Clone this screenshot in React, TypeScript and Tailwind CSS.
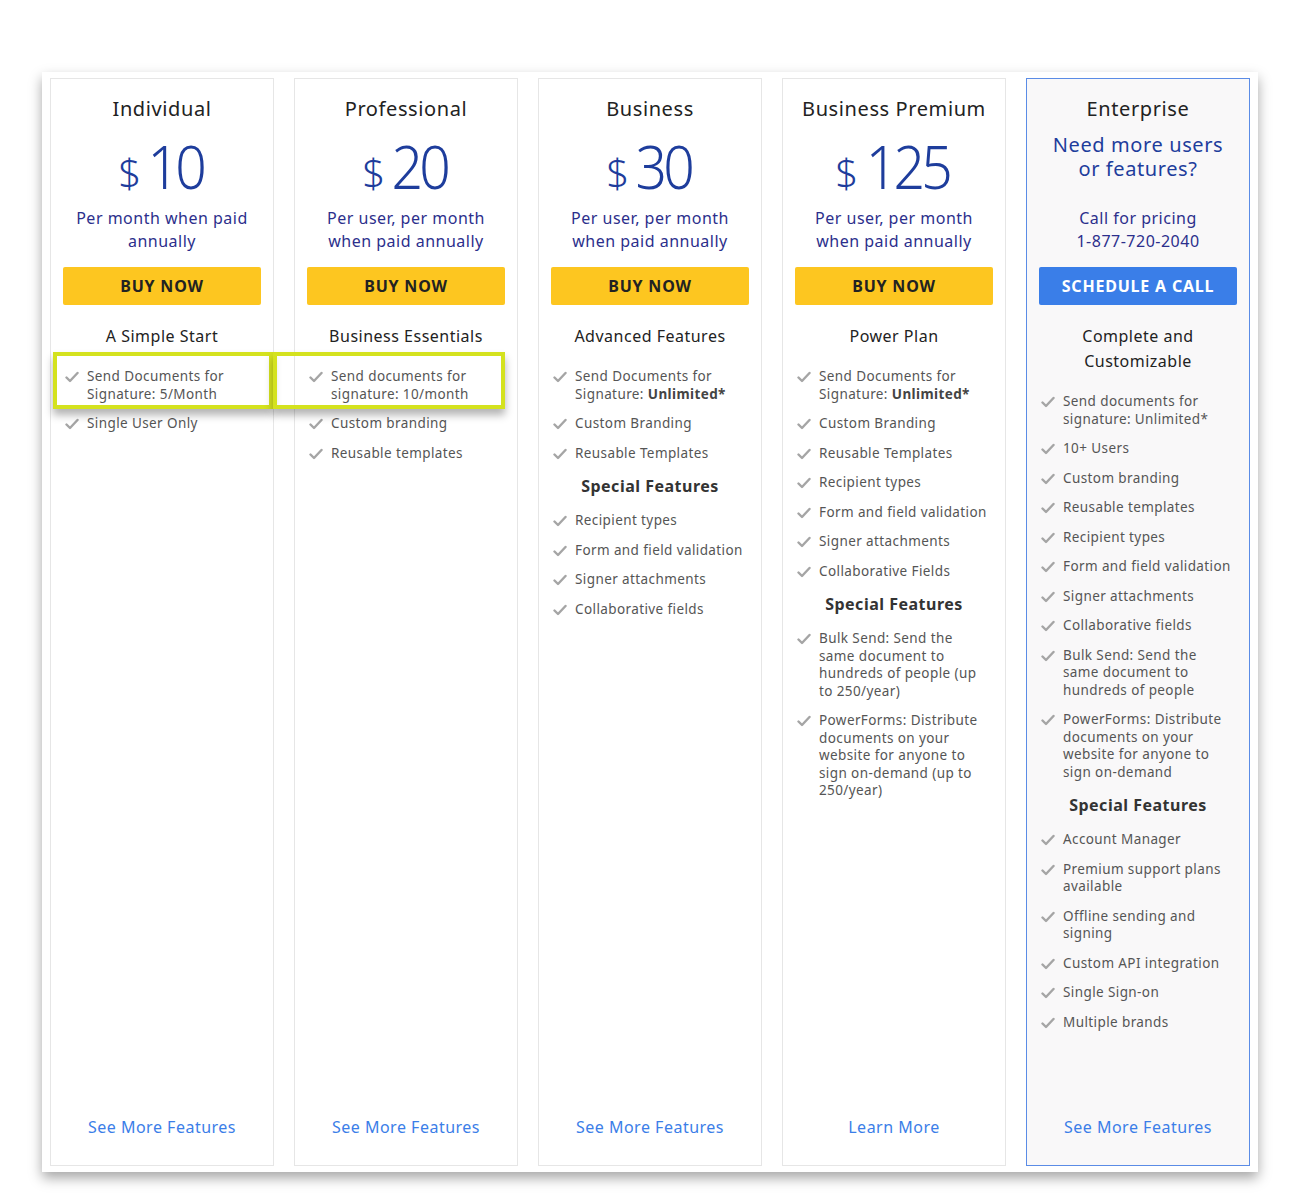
import { ReactNode } from "react";

type Item = string | { s: string } | { b: [string, string] };

interface Plan {
  name: string;
  price?: string;
  sub: string[];
  button: string;
  heading: string[];
  items: Item[];
  link: string;
  enterprise?: boolean;
}

const plans: Plan[] = [
  {
    name: "Individual",
    price: "10",
    sub: ["Per month when paid", "annually"],
    button: "BUY NOW",
    heading: ["A Simple Start"],
    items: ["Send Documents for\nSignature: 5/Month", "Single User Only"],
    link: "See More Features",
  },
  {
    name: "Professional",
    price: "20",
    sub: ["Per user, per month", "when paid annually"],
    button: "BUY NOW",
    heading: ["Business Essentials"],
    items: ["Send documents for\nsignature: 10/month", "Custom branding", "Reusable templates"],
    link: "See More Features",
  },
  {
    name: "Business",
    price: "30",
    sub: ["Per user, per month", "when paid annually"],
    button: "BUY NOW",
    heading: ["Advanced Features"],
    items: [
      { b: ["Send Documents for\nSignature: ", "Unlimited*"] },
      "Custom Branding",
      "Reusable Templates",
      { s: "Special Features" },
      "Recipient types",
      "Form and field validation",
      "Signer attachments",
      "Collaborative fields",
    ],
    link: "See More Features",
  },
  {
    name: "Business Premium",
    price: "125",
    sub: ["Per user, per month", "when paid annually"],
    button: "BUY NOW",
    heading: ["Power Plan"],
    items: [
      { b: ["Send Documents for\nSignature: ", "Unlimited*"] },
      "Custom Branding",
      "Reusable Templates",
      "Recipient types",
      "Form and field validation",
      "Signer attachments",
      "Collaborative Fields",
      { s: "Special Features" },
      "Bulk Send: Send the\nsame document to\nhundreds of people (up\nto 250/year)",
      "PowerForms: Distribute\ndocuments on your\nwebsite for anyone to\nsign on-demand (up to\n250/year)",
    ],
    link: "Learn More",
  },
  {
    name: "Enterprise",
    sub: ["Call for pricing", "1-877-720-2040"],
    button: "SCHEDULE A CALL",
    heading: ["Complete and", "Customizable"],
    items: [
      "Send documents for\nsignature: Unlimited*",
      "10+ Users",
      "Custom branding",
      "Reusable templates",
      "Recipient types",
      "Form and field validation",
      "Signer attachments",
      "Collaborative fields",
      "Bulk Send: Send the\nsame document to\nhundreds of people",
      "PowerForms: Distribute\ndocuments on your\nwebsite for anyone to\nsign on-demand",
      { s: "Special Features" },
      "Account Manager",
      "Premium support plans\navailable",
      "Offline sending and\nsigning",
      "Custom API integration",
      "Single Sign-on",
      "Multiple brands",
    ],
    link: "See More Features",
    enterprise: true,
  },
];

function Check() {
  return (
    <svg width="14" height="12" viewBox="0 0 14 12" className="mt-[3px] shrink-0">
      <path d="M1.5 6.5 L5 10 L12.5 2" fill="none" stroke="#a5a5a5" strokeWidth="2.4" strokeLinecap="round" strokeLinejoin="round" />
    </svg>
  );
}

function Feature({ item }: { item: Item }) {
  if (typeof item === "object" && "s" in item) {
    return <p className="text-center text-[16px] leading-[20px] font-bold text-[#333] pt-[2px] pb-[4px] tracking-[0.5px]">{item.s}</p>;
  }
  let content: ReactNode;
  if (typeof item === "string") content = item;
  else
    content = (
      <>
        {item.b[0]}
        <b className="text-[#444]">{item.b[1]}</b>
      </>
    );
  return (
    <div className="flex gap-[8px] items-start">
      <Check />
      <p className="whitespace-pre-line text-[13.5px] leading-[17.5px] text-[#555] tracking-[0.4px]">{content}</p>
    </div>
  );
}

function Column({ plan }: { plan: Plan }) {
  return (
    <div
      className={`w-[224px] flex flex-col items-center border ${
        plan.enterprise ? "border-[#5b8ce6] bg-[#f9f8f9]" : "border-[#e6e6e6] bg-white"
      }`}
    >
      <h2 className="mt-[18px] text-[20px] leading-[24px] text-[#222] tracking-[0.6px]">{plan.name}</h2>
      {plan.price ? (
        <div className="mt-[12px] flex items-start text-[#1e3d9c] h-[66px]">
          <span className="text-[40px] leading-[40px] mt-[20px] mr-[4px] font-light">$</span>
          <span className="text-[60px] leading-[66px] tracking-[-4px] font-light scale-x-[0.92]">{plan.price}</span>
        </div>
      ) : (
        <p className="mt-[12px] text-center text-[20px] leading-[24px] text-[#1e3d9c] tracking-[0.6px] h-[66px]">
          Need more users
          <br />
          or features?
        </p>
      )}
      <p className="mt-[8px] text-center text-[16px] leading-[23px] text-[#2c2f8c] tracking-[0.5px]">
        {plan.sub[0]}
        <br />
        {plan.sub[1]}
      </p>
      <div
        className={`mt-[14px] w-[198px] h-[38px] rounded-[2px] flex items-center justify-center text-[16px] font-bold tracking-[0.8px] ${
          plan.enterprise ? "bg-[#3a7ee8] text-white" : "bg-[#fdc620] text-[#222]"
        }`}
      >
        {plan.button}
      </div>
      <p className="mt-[19px] text-center text-[16px] leading-[25px] text-[#222] tracking-[0.5px]">
        {plan.heading.map((h) => (
          <span key={h} className="block">
            {h}
          </span>
        ))}
      </p>
      <div className="mt-[19px] self-stretch px-[14px] flex flex-col gap-[12px]">
        {plan.items.map((it, i) => (
          <Feature key={i} item={it} />
        ))}
      </div>
      <a className="mt-auto mb-[26px] text-[16px] text-[#3b7ee8] tracking-[0.5px]">{plan.link}</a>
    </div>
  );
}

export default function App() {
  return (
    <div className="w-[1300px] h-[1200px] bg-white pt-[72px] pl-[42px]" style={{ fontFamily: '"Noto Sans", "Open Sans", sans-serif' }}>
      <div className="relative w-[1216px] h-[1100px] bg-white shadow-[0_6px_12px_rgba(0,0,0,0.35)] px-[8px] py-[6px] flex gap-[20px]">
        {plans.map((p) => (
          <Column key={p.name} plan={p} />
        ))}
        <div className="absolute left-[11px] top-[280px] w-[220px] h-[57px] border-[4px] border-[#d4e21e] shadow-[0_6px_8px_rgba(0,0,0,0.3)]" />
        <div className="absolute left-[231px] top-[280px] w-[232px] h-[57px] border-[4px] border-[#d4e21e] shadow-[0_6px_8px_rgba(0,0,0,0.3)]" />
      </div>
    </div>
  );
}
